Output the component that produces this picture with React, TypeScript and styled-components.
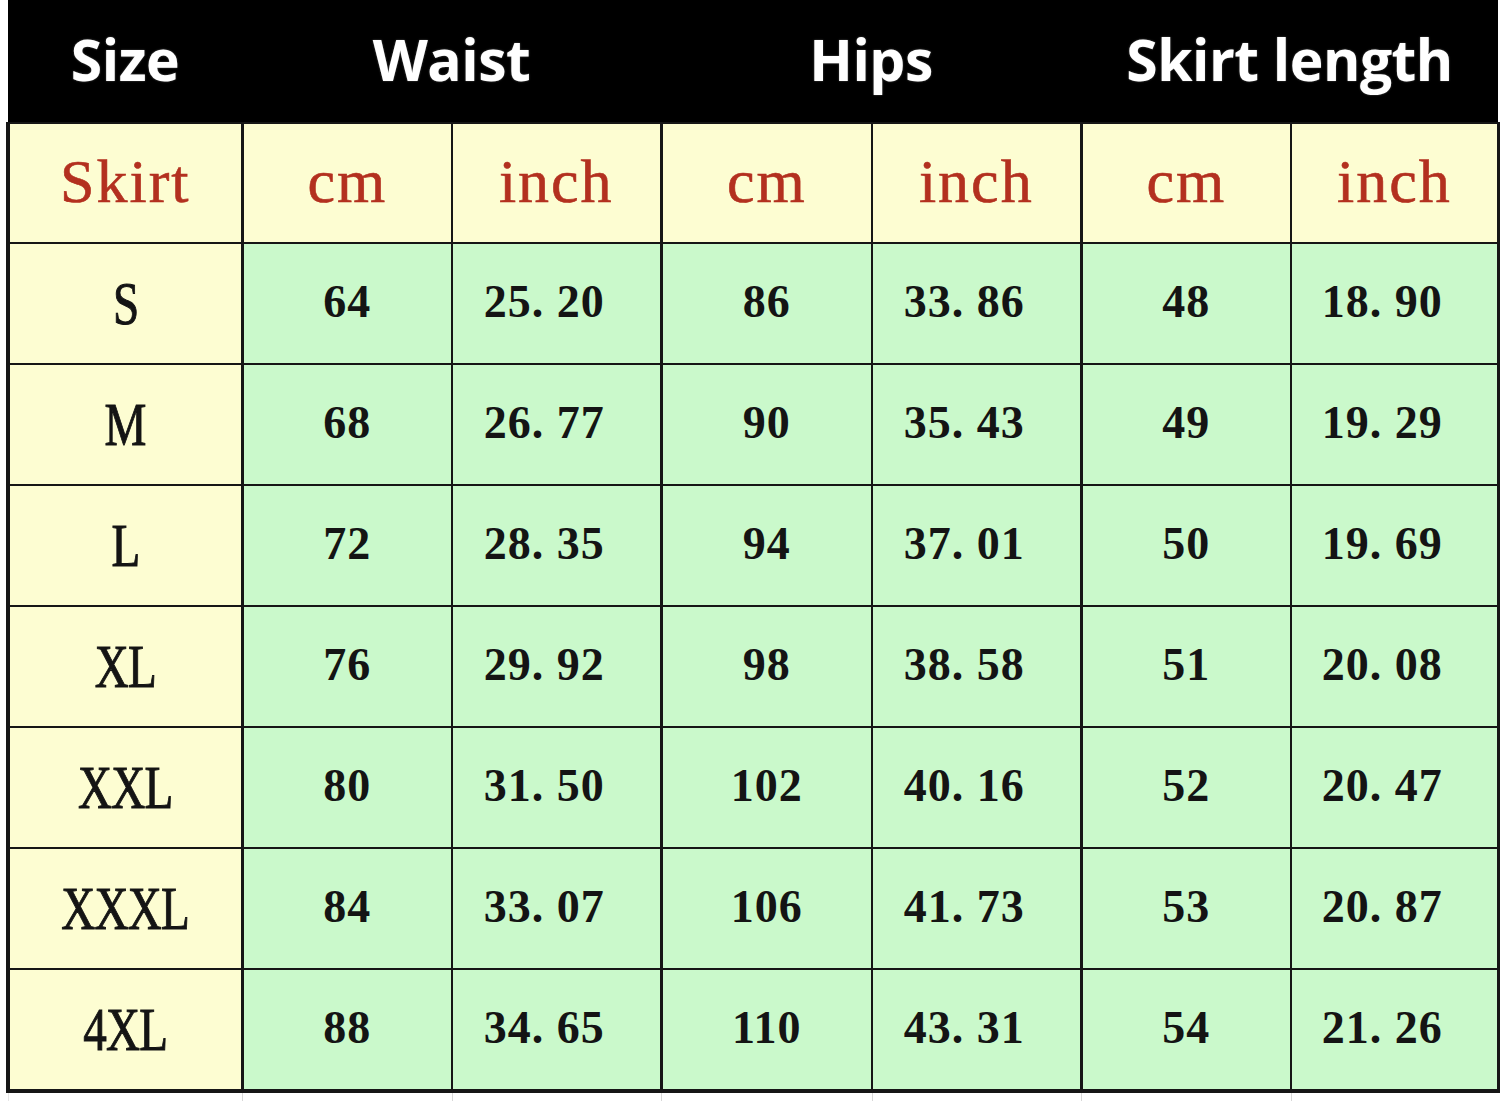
import styled, { createGlobalStyle } from 'styled-components';

const GlobalStyle = createGlobalStyle`
  html, body { margin: 0; padding: 0; background: #ffffff; }
  body { width: 1500px; height: 1101px; overflow: hidden; }
`;

const Page = styled.div`
  padding-left: 6px;
  background: #ffffff;
`;

const Chart = styled.table`
  border-collapse: collapse;
  table-layout: fixed;
  width: 1490px;
`;

const HeadCell = styled.th`
  height: 118px;
  padding: 0 0 4px;
  background: #000000;
  color: #ffffff;
  font-family: "Open Sans", "Noto Sans", sans-serif;
  font-weight: 700;
  font-size: 57px;
  letter-spacing: -0.5px;
  text-align: center;
  vertical-align: middle;
  border: none;
  text-shadow: 0 0 2px rgba(255, 255, 255, 0.35);
`;

const Cell = styled.td<{ $tone: 'yellow' | 'green'; $thick?: boolean; $tall?: boolean; $inset?: boolean }>`
  padding: 0 ${p => (p.$inset ? '24px' : '0')} 0 0;
  height: ${p => (p.$tall ? '118px' : '119px')};
  background: ${p => (p.$tone === 'yellow' ? '#fdfdd2' : '#caf9cb')};
  border: 2px solid #161616;
  border-left-width: ${p => (p.$thick ? '3px' : '2px')};
  border-right-width: 2px;
  text-align: center;
  vertical-align: middle;
  &:first-child { border-left-width: 4px; }
  &:last-child { border-right-width: 3px; }
`;

const UnitText = styled.span`
  display: inline-block;
  font-family: "Liberation Serif", "Times New Roman", serif;
  font-size: 62px;
  color: #b3301f;
  letter-spacing: 2px;
  -webkit-text-stroke: 0.6px #b3301f;
  transform: translateY(-2px);
`;

const SizeText = styled.span`
  display: inline-block;
  font-family: "Liberation Serif", "Times New Roman", serif;
  font-size: 62px;
  color: #141414;
  -webkit-text-stroke: 1px #141414;
  transform: scaleX(0.76);
  letter-spacing: -1px;
`;

const NumText = styled.span`
  display: inline-block;
  font-family: "Liberation Serif", "Times New Roman", serif;
  font-weight: 700;
  font-size: 46px;
  letter-spacing: 1px;
  color: #141414;
  transform: translateY(-2px);
`;

const GhostCell = styled.td`
  height: 12px;
  padding: 0;
  border: none;
  border-left: 1px solid #d8d8d8;
  border-top: 4px solid #161616;
  &:first-child { border-left-color: #e6e6e6; }
`;

const widths = [234, 210, 209, 211, 209, 210, 207];

const rows = [
  ['S', '64', '25.20', '86', '33.86', '48', '18.90'],
  ['M', '68', '26.77', '90', '35.43', '49', '19.29'],
  ['L', '72', '28.35', '94', '37.01', '50', '19.69'],
  ['XL', '76', '29.92', '98', '38.58', '51', '20.08'],
  ['XXL', '80', '31.50', '102', '40.16', '52', '20.47'],
  ['XXXL', '84', '33.07', '106', '41.73', '53', '20.87'],
  ['4XL', '88', '34.65', '110', '43.31', '54', '21.26'],
];

// group starts get the heavier rule
const thickCols = [1, 3, 5];

const formatNum = (v: string) => v.replace('.', '. ');

export default function App() {
  return (
    <>
      <GlobalStyle />
      <Page>
        <Chart>
          <colgroup>
            {widths.map((w, i) => (
              <col key={i} style={{ width: w }} />
            ))}
          </colgroup>
          <thead>
            <tr>
              <HeadCell>Size</HeadCell>
              <HeadCell colSpan={2}>Waist</HeadCell>
              <HeadCell colSpan={2}>Hips</HeadCell>
              <HeadCell colSpan={2}>Skirt length</HeadCell>
            </tr>
          </thead>
          <tbody>
            <tr>
              <Cell $tone="yellow" $tall>
                <UnitText>Skirt</UnitText>
              </Cell>
              {['cm', 'inch', 'cm', 'inch', 'cm', 'inch'].map((u, i) => (
                <Cell key={i} $tone="yellow" $tall $thick={thickCols.includes(i + 1)}>
                  <UnitText>{u}</UnitText>
                </Cell>
              ))}
            </tr>
            {rows.map(r => (
              <tr key={r[0]}>
                <Cell $tone="yellow">
                  <SizeText>{r[0]}</SizeText>
                </Cell>
                {r.slice(1).map((v, i) => (
                  <Cell
                    key={i}
                    $tone="green"
                    $thick={thickCols.includes(i + 1)}
                    $inset={v.includes('.')}
                  >
                    <NumText>{formatNum(v)}</NumText>
                  </Cell>
                ))}
              </tr>
            ))}
            <tr>
              {widths.map((_, i) => (
                <GhostCell key={i} />
              ))}
            </tr>
          </tbody>
        </Chart>
      </Page>
    </>
  );
}
